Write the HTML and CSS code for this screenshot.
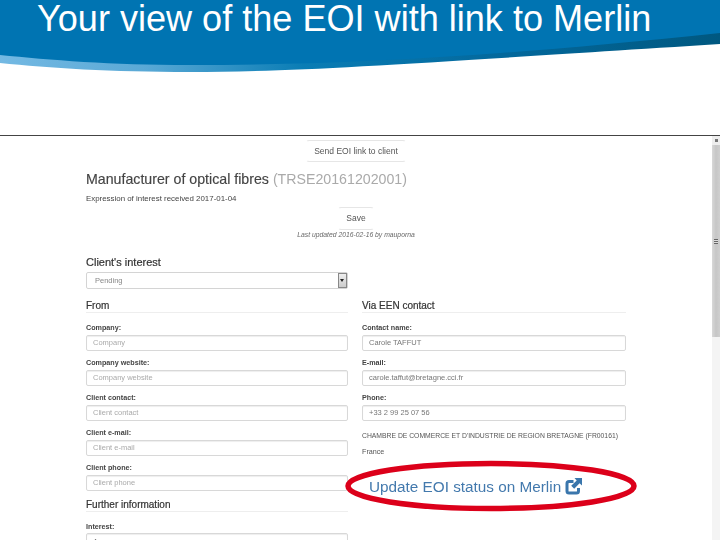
FILE: index.html
```html
<!DOCTYPE html>
<html>
    <head>
        <meta charset="utf-8">
        <title>Your view of the EOI with link to Merlin</title>
        <link rel="stylesheet" href="styles.css">
    </head>
    <body>
        <div id="slide">
            <div id="banner">
                <svg class="wave" width="720" height="80" viewBox="0 0 720 80">
                    <defs>
                        <linearGradient id="edge" x1="0" y1="0" x2="1" y2="0">
                            <stop offset="0" stop-color="#74b9e3"/>
                            <stop offset="0.2" stop-color="#5aa9d6"/>
                            <stop offset="0.42" stop-color="#0a7db5"/>
                            <stop offset="0.7" stop-color="#03689c"/>
                            <stop offset="1" stop-color="#005880"/>
                        </linearGradient>
                    </defs>
                    <path fill="url(#edge)" d="M0 54 L0 63 C50 68 110 72 190 72 C300 72 420 63 720 44 L720 32 Z"/>
                    <path fill="#0074b2" d="M0 0 L720 0 L720 33 C520 54 360 65 190 65 C110 65 50 60 0 55 Z"/>
                </svg>
                <h1>Your view of the EOI with link to Merlin</h1>
            </div>

            <div id="capture">
                <div id="form">
                    <div class="btn-row"><div class="btn send">Send EOI link to client</div></div>
                    <h2>Manufacturer of optical fibres <span class="ref">(TRSE20161202001)</span></h2>
                    <p class="received">Expression of interest received 2017-01-04</p>
                    <div class="btn-row save-row"><div class="btn save">Save</div></div>
                    <p class="updated">Last updated 2016-02-16 by mauporna</p>

                    <h3 class="interest">Client's interest</h3>
                    <div class="select">
                        <span>Pending</span>
                        <span class="select-arrow"></span>
                    </div>

                    <div class="columns">
                        <div class="col">
                            <h4>From</h4>
                            <label>Company:</label>
                            <div class="field empty">Company</div>
                            <label>Company website:</label>
                            <div class="field empty">Company website</div>
                            <label>Client contact:</label>
                            <div class="field empty">Client contact</div>
                            <label>Client e-mail:</label>
                            <div class="field empty">Client e-mail</div>
                            <label>Client phone:</label>
                            <div class="field empty">Client phone</div>
                            <h4 class="further">Further information</h4>
                            <label>Interest:</label>
                            <div class="field area">A</div>
                        </div>
                        <div class="col">
                            <h4>Via EEN contact</h4>
                            <label>Contact name:</label>
                            <div class="field">Carole TAFFUT</div>
                            <label>E-mail:</label>
                            <div class="field">carole.taffut@bretagne.cci.fr</div>
                            <label>Phone:</label>
                            <div class="field">+33 2 99 25 07 56</div>
                            <p class="org">CHAMBRE DE COMMERCE ET D'INDUSTRIE DE REGION BRETAGNE (FR00161)</p>
                            <p class="country">France</p>
                            <a class="merlin">Update EOI status on Merlin
                                <svg width="17" height="17" viewBox="0 0 17 17">
                                    <path fill="none" stroke="#3a76ac" stroke-width="3" stroke-linejoin="round" d="M8.5 3.5 H4 Q2 3.5 2 5.5 V13 Q2 15 4 15 H11.5 Q13.5 15 13.5 13 V10"/>
                                    <path fill="#3a76ac" d="M9.5 0 H17 V7.5 L14.6 5.3 L9.2 10.8 L6.2 7.8 L11.7 2.4 Z"/>
                                </svg>
                            </a>
                        </div>
                    </div>
                </div>
                <div class="scrollbar">
                    <div class="scroll-up"></div>
                    <div class="scroll-thumb"><span class="grip"></span></div>
                </div>
            </div>

            <svg class="ring" width="296" height="56" viewBox="0 0 296 56">
                <ellipse cx="148" cy="28" rx="143" ry="22.5" fill="none" stroke="#dc001a" stroke-width="5.5"/>
            </svg>
        </div>
    </body>
</html>
```

FILE: styles.css
```css
html, body {
    margin: 0;
    padding: 0;
    background: #fff;
}

body {
    font-family: 'Liberation Sans', Arial, sans-serif;
    width: 720px;
    height: 540px;
    overflow: hidden;
}

#slide {
    position: relative;
    width: 720px;
    height: 540px;
    overflow: hidden;
    display: flex;
    flex-direction: column;
}

#banner {
    position: relative;
    height: 135px;
    flex: none;
}

#banner .wave {
    position: absolute;
    top: 0;
    left: 0;
}

#banner h1 {
    position: relative;
    margin: 0;
    padding: 0 0 0 37px;
    color: #fff;
    font-size: 36.1px;
    font-weight: normal;
    line-height: 38px;
}

#capture {
    flex: 1;
    display: flex;
    min-height: 0;
    border-top: 1px solid #444;
}

#form {
    flex: 1;
    padding: 4px 86px 0 86px;
    color: #444;
    filter: blur(0.4px);
}

.btn-row {
    display: flex;
    justify-content: center;
}

.save-row {
    margin-top: 3px;
}

.btn {
    box-sizing: border-box;
    border: 1px solid #e6e6e6;
    border-radius: 3px;
    font-size: 8.5px;
    text-align: center;
    color: #555;
}

.btn.send {
    width: 100px;
    height: 22px;
    line-height: 20px;
    border-left-color: #fff;
    border-right-color: #fff;
}

.btn.save {
    width: 36px;
    height: 23px;
    line-height: 20px;
    border-left-color: #fff;
    border-right-color: #fff;
}

h2 {
    margin: 9px 0 0;
    font-size: 14.2px;
    line-height: 16px;
    font-weight: normal;
    color: #444;
    -webkit-text-stroke: 0.15px #444;
}

h2 .ref {
    color: #aaa;
    -webkit-text-stroke: 0;
}

.received {
    margin: 7px 0 0;
    font-size: 7.9px;
    line-height: 10px;
}

.updated {
    margin: 0;
    font-size: 6.8px;
    line-height: 9px;
    font-style: italic;
    text-align: center;
    color: #666;
}

h3.interest {
    margin: 16px 0 0;
    font-size: 11px;
    line-height: 14px;
    font-weight: normal;
    color: #333;
    -webkit-text-stroke: 0.2px #333;
}

.select {
    box-sizing: border-box;
    width: 262px;
    height: 17px;
    margin-top: 3px;
    padding-left: 8px;
    border: 1px solid #d4d4d4;
    border-radius: 2px;
    display: flex;
    justify-content: space-between;
    align-items: center;
    font-size: 7.5px;
    color: #888;
}

.select-arrow {
    box-sizing: border-box;
    width: 9px;
    height: 15px;
    background: linear-gradient(#eee, #ccc);
    border: 1px solid #888;
    position: relative;
}

.select-arrow::after {
    content: "";
    position: absolute;
    left: 1px;
    top: 5px;
    border: 2.5px solid transparent;
    border-top: 3px solid #222;
}

.columns {
    display: grid;
    grid-template-columns: 262px 264px;
    column-gap: 14px;
    margin-top: 10px;
}

h4 {
    margin: 0 0 10px;
    height: 13px;
    font-size: 10px;
    line-height: 13px;
    font-weight: normal;
    color: #333;
    -webkit-text-stroke: 0.2px #333;
    border-bottom: 1px solid #eee;
}

h4.further {
    margin-top: 7px;
}

label {
    display: block;
    height: 10px;
    margin-bottom: 2px;
    font-size: 7.2px;
    line-height: 10px;
    font-weight: bold;
    color: #444;
}

.field {
    box-sizing: border-box;
    height: 16px;
    margin-bottom: 7px;
    padding-left: 6px;
    border: 1px solid #d8d8d8;
    border-radius: 2px;
    box-shadow: inset 0 1px 1px #eee;
    font-size: 7.5px;
    line-height: 14px;
    color: #777;
}

.field.empty {
    color: #aaa;
}

.field.area {
    height: 40px;
    margin-top: -1px;
    line-height: 15px;
}

.org {
    margin: 10px 0 0;
    font-size: 6.8px;
    line-height: 10px;
    white-space: nowrap;
    color: #555;
}

.country {
    margin: 6px 0 0;
    font-size: 7.2px;
    line-height: 10px;
    color: #555;
}

.merlin {
    display: flex;
    align-items: center;
    gap: 4px;
    margin: 21px 0 0 7px;
    font-size: 15.3px;
    line-height: 17px;
    color: #4379ad;
    white-space: nowrap;
}

.scrollbar {
    width: 8px;
    flex: none;
    background: #f4f4f4;
    filter: blur(0.35px);
}

.scroll-up {
    height: 9px;
    background: #eee;
    display: flex;
    justify-content: center;
    padding-top: 3px;
    box-sizing: border-box;
}

.scroll-up::after {
    content: "";
    width: 3px;
    height: 3px;
    background: #777;
}

.scroll-thumb {
    height: 192px;
    background: linear-gradient(90deg, #d8d8d8, #c6c6c6 50%, #cfcfcf);
    display: flex;
    align-items: center;
    justify-content: center;
}

.grip {
    width: 4px;
    height: 5px;
    background: repeating-linear-gradient(#666 0 1px, #ddd 1px 2px);
}

/* red marker drawn over the capture */
.ring {
    position: absolute;
    left: 343px;
    top: 458px;
}
```
